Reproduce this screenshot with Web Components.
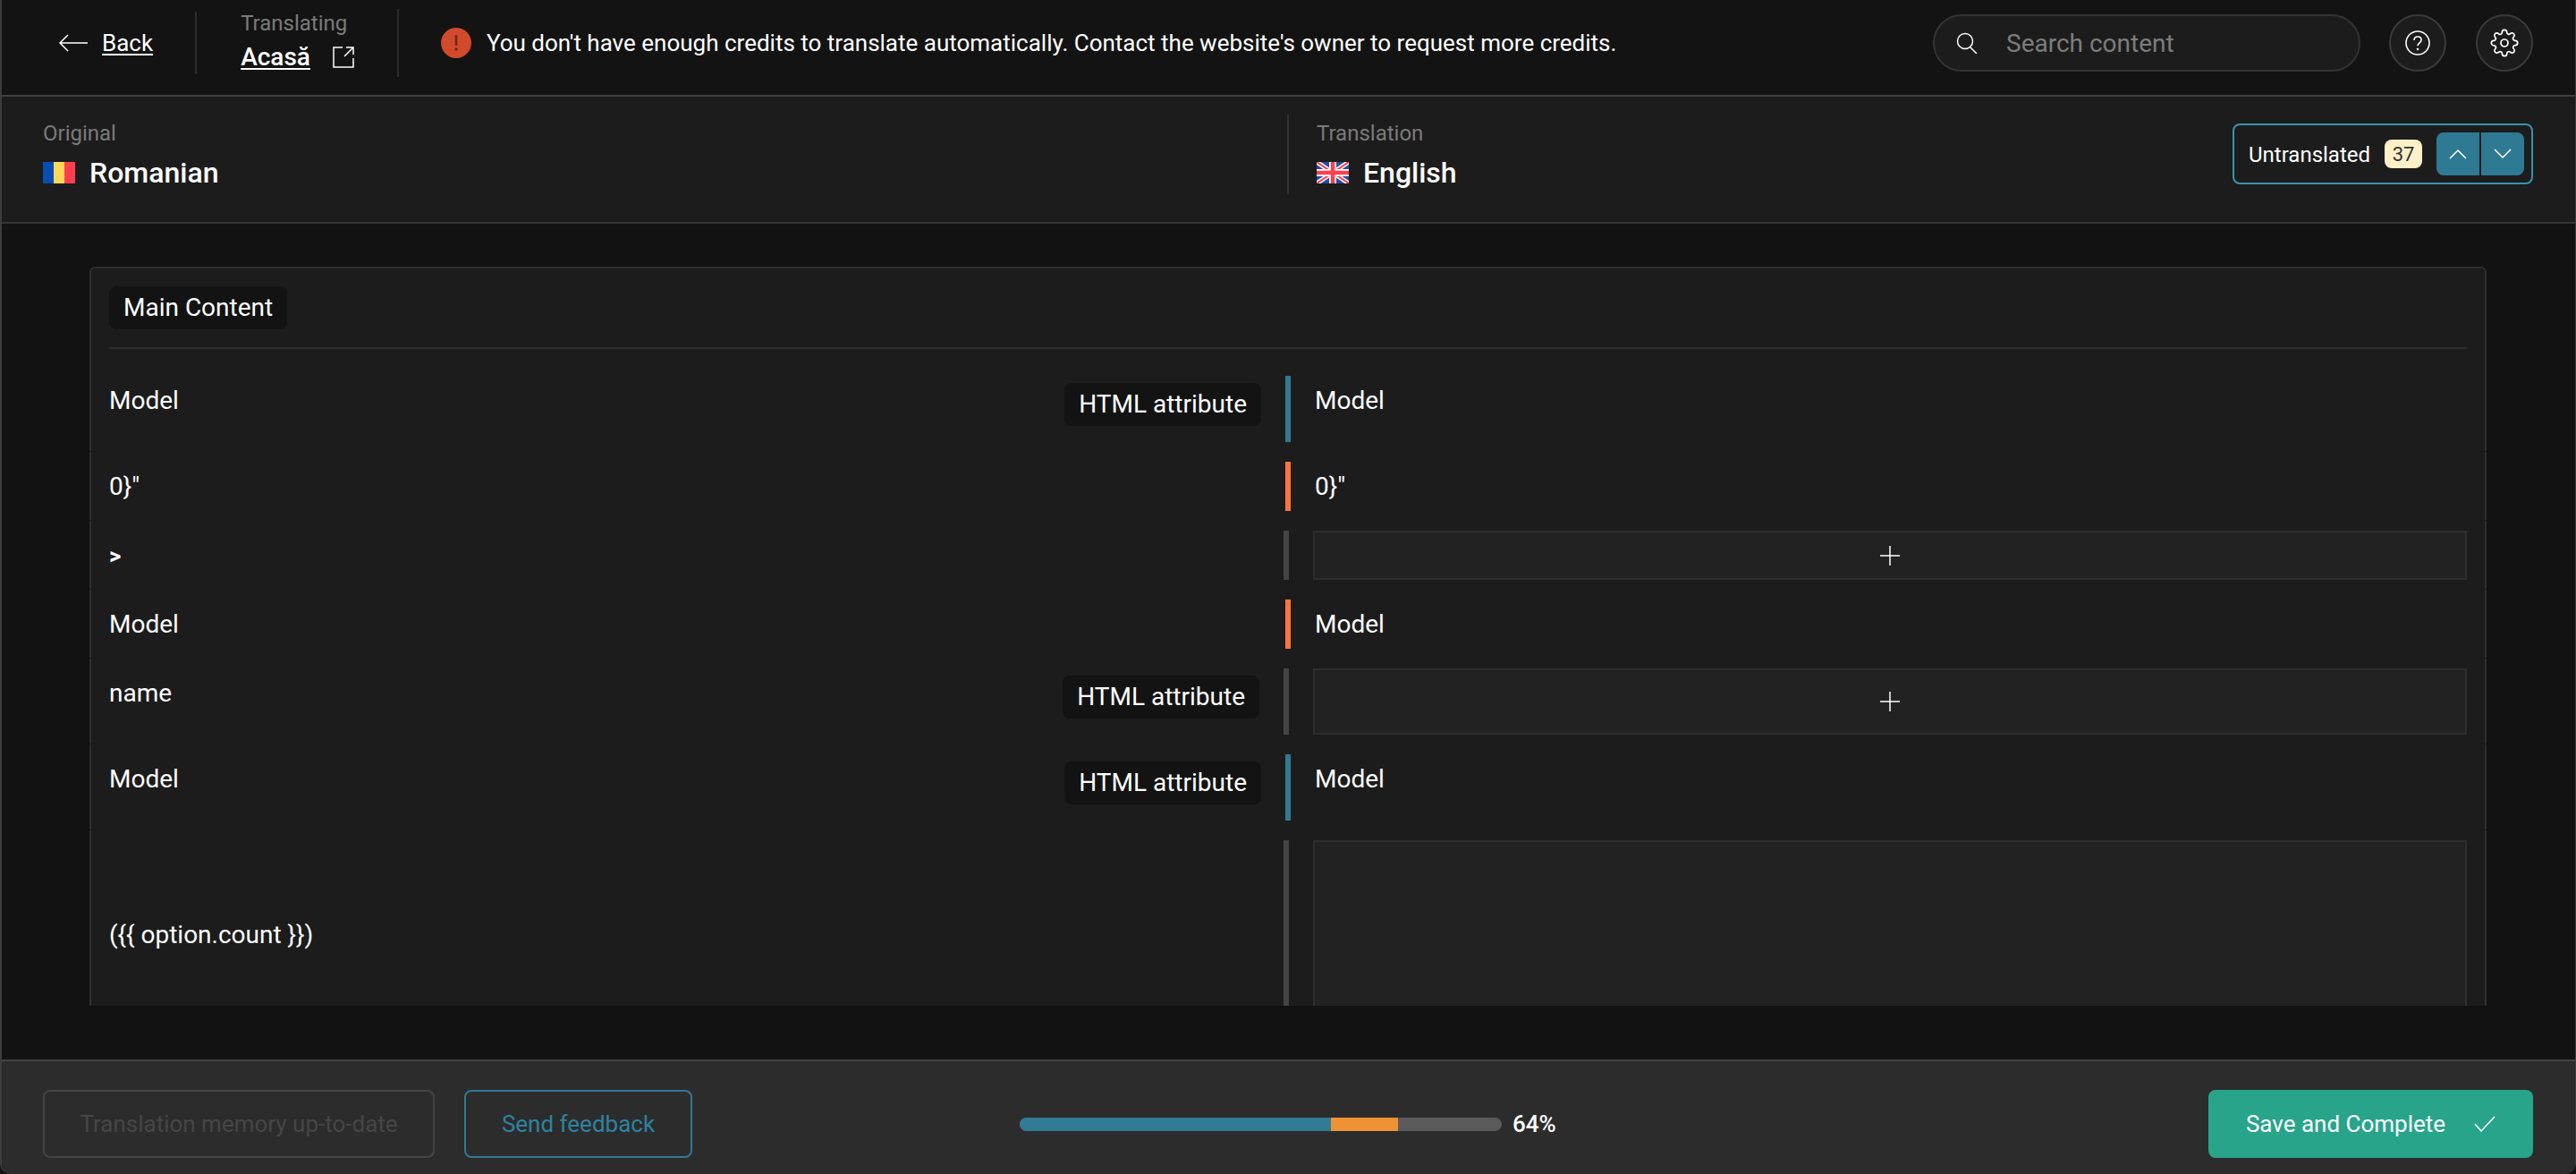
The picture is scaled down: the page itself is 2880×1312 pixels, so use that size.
<!DOCTYPE html>
<html lang="en">
<head>
<meta charset="utf-8">
<title>Translate content</title>
<style>
  html, body { margin: 0; height: 100%; background: #121212; }
  body { font-family: Roboto, "Liberation Sans", sans-serif; color: #fff; font-size: 26px; }
</style>
</head>
<body>
<translate-app>
  <top-bar></top-bar>
  <language-bar></language-bar>
  <content-card title="Main Content">
    <string-row state="translated" tag="HTML attribute"><span>Model</span><span slot="target">Model</span></string-row>
    <string-row state="changed"><span>0}"</span><span slot="target">0}"</span></string-row>
    <string-row state="empty"><span style="font-size: 26px; line-height: 1; font-weight: 700;">&gt;</span></string-row>
    <string-row state="changed"><span>Model</span><span slot="target">Model</span></string-row>
    <string-row state="empty" tag="HTML attribute"><span>name</span></string-row>
    <string-row state="translated" tag="HTML attribute"><span>Model</span><span slot="target">Model</span></string-row>
    <string-row state="empty" tall><span>({{ option.count }})</span></string-row>
  </content-card>
  <footer-bar></footer-bar>
</translate-app>

<script>
class ShadowBase extends HTMLElement {
  constructor() {
    super();
    this.attachShadow({ mode: "open" });
  }

  connectedCallback() {
    this.render();
  }
}

class TranslateApp extends ShadowBase {
  render() {
    this.shadowRoot.innerHTML = `
      <style>
        :host {
          display: flex;
          flex-direction: column;
          height: 100vh;
          box-sizing: border-box;
          border-left: 2px solid #3c3c3c;
          border-right: 1px solid #3c3c3c;
          border-radius: 0 0 12px 12px;
          overflow: hidden;
          background: #121212;
        }
      </style>
      <slot></slot>
    `;
  }
}

class TagChip extends ShadowBase {
  render() {
    this.shadowRoot.innerHTML = `
      <style>
        :host {
          display: inline-flex;
          align-items: center;
          height: 48px;
          padding: 0 16px 2px;
          box-sizing: border-box;
          flex: none;
          border-radius: 8px;
          background: #131313;
          color: #fff;
          font-size: 28px;
          white-space: nowrap;
        }
      </style>
      <slot></slot>
    `;
  }
}

class TopBar extends ShadowBase {
  render() {
    this.shadowRoot.innerHTML = `
      <style>
        :host {
          display: flex;
          align-items: center;
          flex: none;
          height: 96px;
          padding: 0 47px 10px 63px;
          border-bottom: 2px solid #3f3f3f;
          background: #131313;
        }
        a { color: #fff; text-decoration: underline; text-underline-offset: 3px; text-decoration-thickness: 2px; }
        .back { display: flex; align-items: center; gap: 16px; }
        .divider { width: 2px; background: #2c2c2c; flex: none; }
        .d1 { height: 70px; margin: 0 49px 0 47px; }
        .d2 { height: 76px; margin: 0 47px 0 48px; }
        .page { display: flex; flex-direction: column; gap: 9px; padding-bottom: 6px; }
        .label { font-size: 24px; line-height: 28px; color: #7b7b7b; }
        .name { display: flex; align-items: center; gap: 25px; font-size: 28px; line-height: 30px; font-weight: 500; }
        .alert { display: flex; align-items: center; gap: 17px; white-space: nowrap; }
        .search {
          display: flex;
          align-items: center;
          width: 478px;
          height: 64px;
          margin-left: auto;
          padding-left: 24px;
          box-sizing: border-box;
          border: 2px solid #333;
          border-radius: 32px;
          background: #1c1c1c;
          color: #7d7d7d;
          font-size: 28px;
          gap: 32px;
        }
        .round {
          display: flex;
          align-items: center;
          justify-content: center;
          width: 64px;
          height: 64px;
          box-sizing: border-box;
          border: 2px solid #3a3a3a;
          border-radius: 50%;
          background: #1c1c1c;
          flex: none;
        }
        .help { margin-left: 32px; }
        .gear { margin-left: 33px; }
        svg { display: block; flex: none; }
      </style>
      <div class="back">
        <svg width="33" height="22" viewBox="0 0 33 22" fill="none" stroke="#fff" stroke-width="1.5"><path d="M33 11H2M11 2l-9 9 9 9"/></svg>
        <a>Back</a>
      </div>
      <div class="divider d1"></div>
      <div class="page">
        <div class="label">Translating</div>
        <div class="name">
          <a>Acasă</a>
          <svg width="24" height="24" viewBox="0 0 24 24" fill="none" stroke="#fff" stroke-width="1.5"><path d="M11 1H1v22h22V13M13 11L23 1M15 1h8v8"/></svg>
        </div>
      </div>
      <div class="divider d2"></div>
      <div class="alert">
        <svg width="34" height="34" viewBox="0 0 34 34"><circle cx="17" cy="17" r="17" fill="#d14a2c"/><rect x="15.6" y="8" width="2.8" height="12" rx="1" fill="#7c2712"/><circle cx="17" cy="24" r="1.8" fill="#7c2712"/></svg>
        <span>You don't have enough credits to translate automatically. Contact the website's owner to request more credits.</span>
      </div>
      <div class="search">
        <svg width="24" height="24" viewBox="0 0 24 24" fill="none" stroke="#fff" stroke-width="1.5"><circle cx="10" cy="10" r="8.5"/><path d="M15.5 16.5L23 24"/></svg>
        <span>Search content</span>
      </div>
      <div class="round help">
        <svg width="28" height="28" viewBox="0 0 28 28" fill="none" stroke="#fff" stroke-width="1.6"><circle cx="14" cy="14" r="13"/><path d="M10 11c0-2.5 1.8-4 4.1-4s4 1.5 4 3.6c0 3.2-4.1 3.2-4.1 6.6"/><circle cx="14" cy="21" r="1.3" fill="#fff" stroke="none"/></svg>
      </div>
      <div class="round gear">
        <svg width="32" height="32" viewBox="0 0 24 24" fill="none" stroke="#fff" stroke-width="1.3"><circle cx="12" cy="12" r="3"/><path d="M19.4 15a1.65 1.65 0 0 0 .33 1.82l.06.06a2 2 0 0 1 0 2.83 2 2 0 0 1-2.83 0l-.06-.06a1.65 1.65 0 0 0-1.82-.33 1.65 1.65 0 0 0-1 1.51V21a2 2 0 0 1-2 2 2 2 0 0 1-2-2v-.09A1.65 1.65 0 0 0 9 19.4a1.65 1.65 0 0 0-1.82.33l-.06.06a2 2 0 0 1-2.83 0 2 2 0 0 1 0-2.83l.06-.06a1.65 1.65 0 0 0 .33-1.82 1.65 1.65 0 0 0-1.51-1H3a2 2 0 0 1-2-2 2 2 0 0 1 2-2h.09A1.65 1.65 0 0 0 4.6 9a1.65 1.65 0 0 0-.33-1.82l-.06-.06a2 2 0 0 1 0-2.83 2 2 0 0 1 2.83 0l.06.06a1.65 1.65 0 0 0 1.82.33H9a1.65 1.65 0 0 0 1-1.51V3a2 2 0 0 1 2-2 2 2 0 0 1 2 2v.09a1.65 1.65 0 0 0 1 1.51 1.65 1.65 0 0 0 1.82-.33l.06-.06a2 2 0 0 1 2.83 0 2 2 0 0 1 0 2.83l-.06.06a1.65 1.65 0 0 0-.33 1.82V9a1.65 1.65 0 0 0 1.51 1H21a2 2 0 0 1 2 2 2 2 0 0 1-2 2h-.09a1.65 1.65 0 0 0-1.51 1z"/></svg>
      </div>
    `;
  }
}

class LanguageBar extends ShadowBase {
  render() {
    this.shadowRoot.innerHTML = `
      <style>
        :host {
          display: flex;
          align-items: center;
          flex: none;
          height: 128px;
          padding: 0 47px 12px 46px;
          border-bottom: 2px solid #333;
          background: #1c1c1c;
        }
        .lang { display: flex; flex-direction: column; gap: 11px; padding-top: 2px; }
        .origin { width: 1391px; flex: none; }
        .divider { width: 2px; height: 89px; background: #333; flex: none; margin-right: 31px; }
        .label { font-size: 24px; line-height: 28px; color: #7b7b7b; }
        .name { display: flex; align-items: center; gap: 16px; font-size: 32px; line-height: 38px; font-weight: 500; }
        svg { display: block; flex: none; }
        .filter {
          display: flex;
          align-items: center;
          width: 336px;
          height: 68px;
          margin-left: auto;
          padding: 0 8px 0 16px;
          box-sizing: border-box;
          border: 2px solid #3a93ad;
          border-radius: 8px;
          font-size: 24px;
        }
        .filter-label { flex: 1; padding-top: 2px; white-space: nowrap; }
        .badge {
          display: flex;
          align-items: center;
          justify-content: center;
          width: 42px;
          height: 32px;
          margin: 0 16px 0 0;
          flex: none;
          border-radius: 8px;
          background: #fff0c8;
          color: #333;
          font-size: 22px;
        }
        .step {
          display: flex;
          align-items: center;
          justify-content: center;
          width: 48px;
          height: 48px;
          flex: none;
          background: #2f7a93;
        }
        .up { border-radius: 8px 0 0 8px; margin-right: 2px; }
        .down { border-radius: 0 8px 8px 0; }
      </style>
      <div class="lang origin">
        <div class="label">Original</div>
        <div class="name">
          <svg width="36" height="24" viewBox="0 0 36 24"><rect width="12" height="24" fill="#0a4db0"/><rect x="12" width="12" height="24" fill="#ffd859"/><rect x="24" width="12" height="24" fill="#ff3f4f"/></svg>
          <span>Romanian</span>
        </div>
      </div>
      <div class="divider"></div>
      <div class="lang">
        <div class="label">Translation</div>
        <div class="name">
          <svg width="36" height="24" viewBox="0 0 36 24"><rect width="36" height="24" fill="#1f4fa3"/><path d="M0 0l36 24M36 0L0 24" stroke="#fff" stroke-width="5"/><path d="M0 0l36 24M36 0L0 24" stroke="#ff3f4f" stroke-width="2"/><path d="M18 0v24M0 12h36" stroke="#fff" stroke-width="8"/><path d="M18 0v24M0 12h36" stroke="#ff3f4f" stroke-width="4.5"/></svg>
          <span>English</span>
        </div>
      </div>
      <div class="filter">
        <span class="filter-label">Untranslated</span>
        <span class="badge">37</span>
        <div class="step up"><svg width="20" height="12" viewBox="0 0 20 12" fill="none" stroke="#fff" stroke-width="1.5"><path d="M1 11l9-9 9 9"/></svg></div>
        <div class="step down"><svg width="20" height="12" viewBox="0 0 20 12" fill="none" stroke="#fff" stroke-width="1.5"><path d="M1 1l9 9 9-9"/></svg></div>
      </div>
    `;
  }
}

class ContentCard extends ShadowBase {
  render() {
    const title = this.getAttribute("title") || "";
    this.shadowRoot.innerHTML = `
      <style>
        :host {
          display: block;
          flex: 1;
          min-height: 0;
          padding: 48px 99px 60px 98px;
          box-sizing: border-box;
          background: #121212;
        }
        .card {
          height: 100%;
          overflow: hidden;
          border-radius: 6px 6px 0 0;
          background: #1c1c1c;
        }
        .head {
          padding: 20px 20px 19px;
          border: 2px solid #2e2e2e;
          border-bottom: 0;
          border-radius: 6px 6px 0 0;
        }
        .title { padding-bottom: 20px; border-bottom: 2px solid #2e2e2e; }
      </style>
      <div class="card">
        <div class="head"><div class="title"><tag-chip>${title}</tag-chip></div></div>
        <slot></slot>
      </div>
    `;
  }
}

class StringRow extends ShadowBase {
  render() {
    const state = this.getAttribute("state") || "empty";
    const tag = this.getAttribute("tag");
    const tall = this.hasAttribute("tall");
    const empty = state === "empty";
    const target = empty
      ? `<div class="input ${tall ? "tall" : ""}">${tall ? "" : `<svg width="22" height="22" viewBox="0 0 22 22" stroke="#fff" stroke-width="1.5"><path d="M11 0v22M0 11h22"/></svg>`}</div>`
      : `<div class="text"><slot name="target"></slot></div>`;
    this.shadowRoot.innerHTML = `
      <style>
        :host {
          display: block;
          margin-bottom: 1px;
          padding: 11px 20px 10px;
          border: solid #2e2e2e;
          border-width: 0 2px;
          font-size: 28px;
          line-height: 39px;
        }
        .row { display: flex; align-items: stretch; }
        .source {
          display: flex;
          justify-content: space-between;
          align-items: ${tall ? "center" : "flex-start"};
          width: ${empty ? 1286 : 1288}px;
          flex: none;
        }
        .text { padding: 8px 0; white-space: nowrap; }
        tag-chip { margin: 8px 0 18px; }
        .bar { width: 6px; margin: 0 27px; flex: none; }
        .translated { background: #2f7a93; }
        .changed { background: #ff7538; }
        .empty { background: #444; }
        .target { flex: 1; min-width: 0; }
        .input {
          display: flex;
          align-items: center;
          justify-content: center;
          height: 100%;
          box-sizing: border-box;
          border: 2px solid #2e2e2e;
          background: #222;
        }
        .tall { height: 210px; }
        svg { display: block; }
      </style>
      <div class="row">
        <div class="source">
          <div class="text"><slot></slot></div>
          ${tag ? `<tag-chip>${tag}</tag-chip>` : ""}
        </div>
        <div class="bar ${state}"></div>
        <div class="target">${target}</div>
      </div>
    `;
  }
}

class ProgressMeter extends ShadowBase {
  render() {
    this.shadowRoot.innerHTML = `
      <style>
        :host { display: flex; align-items: center; gap: 12px; }
        .track {
          display: flex;
          width: 539px;
          height: 15px;
          border-radius: 8px;
          overflow: hidden;
          background: #5a5a5a;
        }
        .done { width: 348px; background: #317b94; }
        .changed { width: 75px; background: #ee9236; }
        .value { font-weight: 500; }
      </style>
      <div class="track"><div class="done"></div><div class="changed"></div></div>
      <span class="value">64%</span>
    `;
  }
}

class FooterBar extends ShadowBase {
  render() {
    this.shadowRoot.innerHTML = `
      <style>
        :host {
          display: flex;
          align-items: center;
          flex: none;
          height: 112px;
          padding: 14px 47px 0 46px;
          border-top: 2px solid #444;
          background: #2c2c2c;
        }
        .btn {
          display: flex;
          align-items: center;
          justify-content: center;
          height: 76px;
          box-sizing: border-box;
          border-radius: 8px;
          white-space: nowrap;
          flex: none;
        }
        .memory { width: 438px; border: 2px solid #444; color: #464646; }
        .feedback { width: 255px; margin-left: 33px; border: 2px solid #2f7a93; color: #2f82a0; }
        progress-meter { margin-left: 366px; }
        .save { width: 363px; margin-left: auto; gap: 32px; background: #28a48b; color: #fff; }
        svg { display: block; }
      </style>
      <div class="btn memory">Translation memory up-to-date</div>
      <div class="btn feedback">Send feedback</div>
      <progress-meter></progress-meter>
      <div class="btn save">
        <span>Save and Complete</span>
        <svg width="24" height="18" viewBox="0 0 24 18" fill="none" stroke="#fff" stroke-width="1.5"><path d="M1 9l7 8L23 1"/></svg>
      </div>
    `;
  }
}

customElements.define("translate-app", TranslateApp);
customElements.define("tag-chip", TagChip);
customElements.define("top-bar", TopBar);
customElements.define("language-bar", LanguageBar);
customElements.define("content-card", ContentCard);
customElements.define("string-row", StringRow);
customElements.define("progress-meter", ProgressMeter);
customElements.define("footer-bar", FooterBar);
</script>
</body>
</html>
